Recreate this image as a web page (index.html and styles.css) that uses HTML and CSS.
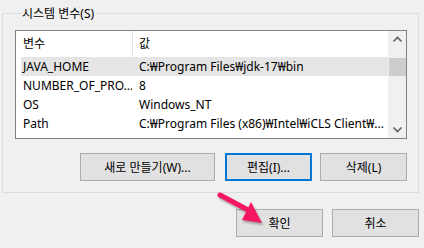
FILE: index.html
```html
<!DOCTYPE html>
<html lang="ko">
<head>
    <meta charset="UTF-8">
    <title>시스템 변수</title>
    <link rel="stylesheet" href="styles.css">
</head>
<body>
    <div class="dialog">
        <fieldset class="group">
            <legend>시스템 변수(S)</legend>

            <div class="listbox">
                <div class="list-area">
                    <div class="row head">
                        <div class="cell first">변수</div>
                        <div class="cell second">값</div>
                    </div>
                    <div class="row selected">
                        <div class="cell first">JAVA_HOME</div>
                        <div class="cell">C:₩Program Files₩jdk-17₩bin</div>
                    </div>
                    <div class="row">
                        <div class="cell first">NUMBER_OF_PRO...</div>
                        <div class="cell">8</div>
                    </div>
                    <div class="row">
                        <div class="cell first">OS</div>
                        <div class="cell">Windows_NT</div>
                    </div>
                    <div class="row">
                        <div class="cell first">Path</div>
                        <div class="cell">C:₩Program Files (x86)₩Intel₩iCLS Client₩...</div>
                    </div>
                </div>
                <div class="scrollbar">
                    <svg class="arrow-btn" width="17" height="17" viewBox="0 0 17 17">
                        <path d="M4.5 10.5 L8.5 6.5 L12.5 10.5" fill="none" stroke="#606060" stroke-width="1.6"/>
                    </svg>
                    <div class="thumb"></div>
                    <div class="track"></div>
                    <svg class="arrow-btn" width="17" height="17" viewBox="0 0 17 17">
                        <path d="M4.5 6.5 L8.5 10.5 L12.5 6.5" fill="none" stroke="#606060" stroke-width="1.6"/>
                    </svg>
                </div>
            </div>

            <div class="buttons">
                <button class="btn wide">새로 만들기(W)...</button>
                <button class="btn focused">편집(I)...</button>
                <button class="btn">삭제(L)</button>
            </div>
        </fieldset>

        <div class="buttons footer">
            <button class="btn">확인</button>
            <button class="btn">취소</button>
        </div>

        <!-- 확인 버튼을 가리키는 화살표 -->
        <svg class="pointer" width="60" height="40" viewBox="0 0 60 40">
            <path d="M4 4 L34 20" stroke="#f5175f" stroke-width="5" stroke-linecap="round"/>
            <path d="M46 32 L26 29 L35 11 Z" fill="#f5175f"/>
        </svg>
    </div>
</body>
</html>
```

FILE: styles.css
```css
* {
    margin: 0;
    padding: 0;
    box-sizing: border-box;
}

body {
    font-family: "Noto Sans", "Noto Sans CJK KR", sans-serif;
    font-size: 12px;
    color: #000;
    background-color: #f0f0f0;
    width: 424px;
    height: 248px;
    overflow: hidden;
}

.dialog {
    position: relative;
    padding: 5px 5px 0 2px;
}

.group {
    border: 1px solid #dcdcdc;
    padding: 8px 11px 11px 12px;
    height: 188px;
}

.group legend {
    margin-left: 6px;
    padding: 0 2px 0 1px;
    line-height: 17px;
    color: #000;
}

.listbox {
    display: flex;
    height: 109px;
    border: 1px solid #828282;
    background-color: #fff;
}

.list-area {
    flex: 1;
    padding-left: 5px;
    overflow: hidden;
}

.row {
    display: grid;
    grid-template-columns: 111px 1fr;
    height: 19px;
    line-height: 19px;
    white-space: nowrap;
}

.row.head {
    height: 26px;
    line-height: 26px;
}

.row.selected {
    background-color: #e5e5e5;
}

.cell {
    overflow: hidden;
    padding-left: 7px;
}

.cell.first {
    padding-left: 2px;
}

.head .second {
    border-left: 1px solid #e5e5e5;
    padding-left: 6px;
}

.scrollbar {
    width: 18px;
    display: flex;
    flex-direction: column;
    background-color: #f0f0f0;
    padding-left: 1px;
}

.arrow-btn {
    display: block;
    flex: none;
}

.thumb {
    height: 18px;
    margin-top: 10px;
    background-color: #cdcdcd;
}

.track {
    flex: 1;
}

.buttons {
    display: flex;
    justify-content: flex-end;
    gap: 9px;
    margin-top: 14px;
}

.btn {
    font-family: "Noto Sans", "Noto Sans CJK KR", sans-serif;
    font-size: 12px;
    color: #000;
    width: 87px;
    height: 28px;
    background-color: #e1e1e1;
    border: 1px solid #adadad;
}

.btn.wide {
    width: 135px;
    margin-right: 1px;
}

.btn.focused {
    border: 2px solid #0078d7;
    margin-right: -1px;
}

.footer {
    margin-top: 16px;
}

.pointer {
    position: absolute;
    left: 216px;
    top: 191px;
    filter: drop-shadow(1px 2px 1px rgba(0, 0, 0, 0.3));
}
```
